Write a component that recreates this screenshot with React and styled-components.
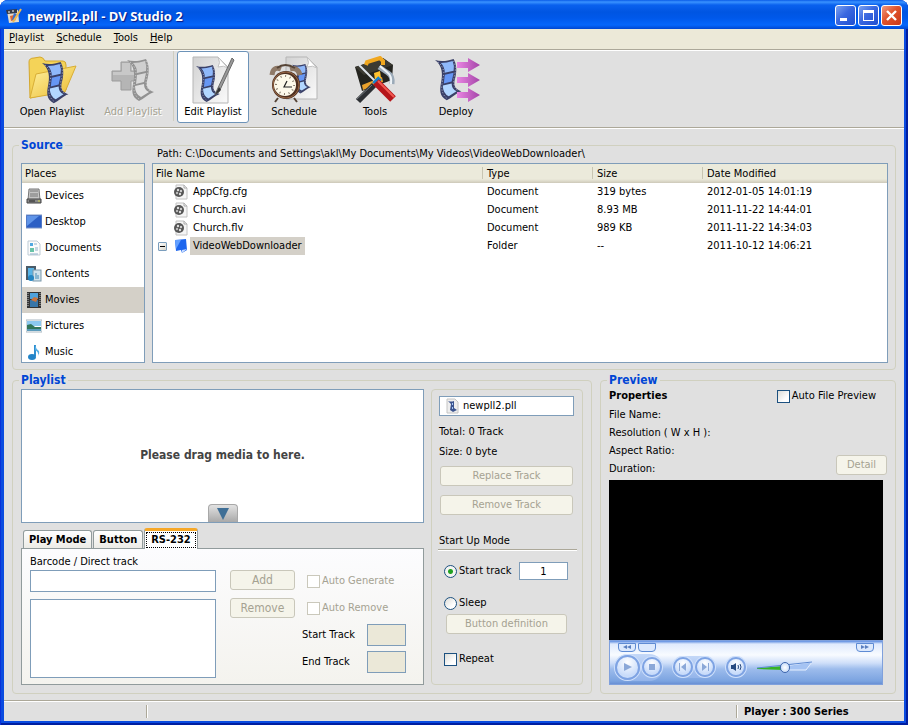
import React, { useState } from 'react';
import styled, { createGlobalStyle, css } from 'styled-components';

const GlobalStyle = createGlobalStyle`
  * { box-sizing: border-box; }
  body {
    margin: 0;
    background: #fff;
    font: 11px/16px "DejaVu Sans Condensed", Tahoma, "Open Sans", sans-serif;
    color: #000;
  }
  button, input, textarea { font: inherit; color: inherit; margin: 0; }
  h1, h2, h3, p, ul, dl, dt { margin: 0; padding: 0; font: inherit; }
  ul { list-style: none; }
`;

// Window frame
const Window = styled.div`
  display: flex;
  flex-direction: column;
  min-height: 100vh;
  border-radius: 8px 8px 0 0;
  background: #0a4be0;
  box-shadow: inset 1px 0 0 #0831d9, inset -2px -2px 0 #001ea0;
  overflow: hidden;
`;
const TitleBar = styled.header`
  display: flex;
  align-items: center;
  gap: 2px;
  height: 29px;
  padding: 2px 6px 0;
  background: linear-gradient(#0a5ce8 0, #3a93ff 2px, #0a61ee 5px, #0055e2 12px, #0058ea 18px, #0566fb 25px, #0046d0 29px);
`;
const WindowTitle = styled.h1`
  flex: 1;
  padding-left: 3px;
  font: bold 13px/16px "Trebuchet MS", "Open Sans", sans-serif;
  color: #fff;
  text-shadow: 1px 1px 1px #0a1883;
`;
const CaptionButton = styled.button`
  width: 21px;
  height: 21px;
  padding: 0;
  border: 1px solid #fff;
  border-radius: 3px;
  background: ${({ $close }) =>
    $close
      ? 'linear-gradient(135deg, #f09a80, #e0532b 45%, #c8381a)'
      : 'linear-gradient(135deg, #7ba2f0, #3a68e0 45%, #1f4fd0)'};
  svg { display: block; }
`;
const Client = styled.div`
  display: flex;
  flex: 1;
  flex-direction: column;
  margin: 0 4px 4px;
  background: #e0e0e0;
`;
const MenuBar = styled.nav`
  display: flex;
  gap: 12px;
  height: 21px;
  padding: 0 5px;
  background: #ece9d8;
  border-bottom: 1px solid #aca899;
`;
const MenuItem = styled.button`
  padding: 0 0 2px;
  border: 0;
  background: none;
  &::first-letter { text-decoration: underline; }
`;

// Toolbar
const Toolbar = styled.div`
  display: flex;
  gap: 9px;
  height: 78px;
  padding: 0 12px;
  border-top: 1px solid #fff;
  border-bottom: 1px solid #aca899;
`;
const ToolButton = styled.button`
  display: flex;
  flex-direction: column;
  align-items: center;
  width: 72px;
  height: 72px;
  padding: 4px 0 0;
  border: 1px solid ${({ $active }) => ($active ? '#6d93b8' : 'transparent')};
  border-radius: 3px;
  background: ${({ $active }) => ($active ? '#fff' : 'none')};
  white-space: nowrap;
  &:disabled {
    color: #a5a292;
    text-shadow: 1px 1px 0 #fff;
  }
`;
const ToolSeparator = styled.span`
  width: 1px;
  height: 70px;
  margin: 0 -6px 0 -5px;
  background: #cfcdc0;
`;

// Group boxes
const Main = styled.main`
  display: grid;
  grid-template-columns: minmax(0, 1fr) 296px;
  gap: 10px 8px;
  flex: 1;
  align-content: start;
  padding: 16px 8px 6px;
  border-top: 1px solid #fff;
`;
const Group = styled.section`
  min-width: 0;
  padding: 0 8px 8px;
  border: 1px solid #d0d0bf;
  border-radius: 4px;
`;
const GroupTitle = styled.h2`
  width: fit-content;
  height: 16px;
  margin: -9px 0 0 -2px;
  padding: 0 2px;
  background: #e0e0e0;
  font-size: 12px;
  font-weight: bold;
  color: #0046d5;
`;
const SourceGroup = styled(Group)`
  grid-column: 1 / -1;
  display: grid;
  grid-template-columns: 124px minmax(0, 1fr);
  grid-template-rows: 17px 200px;
  column-gap: 7px;
  padding-bottom: 6px;
  padding-right: 7px;
`;
const Path = styled.p`
  padding-left: 5px;
  white-space: nowrap;
  overflow: hidden;
`;
const Pane = styled.div`
  min-width: 0;
  overflow: hidden;
  border: 1px solid #7f9db9;
  background: #fff;
`;
const headerLook = css`
  height: 19px;
  background: linear-gradient(#ebeadb 0, #ebeadb 15px, #d6d2c2 18px, #cbc7b8 19px);
`;
const PlacesHeader = styled.h3`
  ${headerLook}
  padding: 2px 3px;
`;
const Place = styled.button`
  display: flex;
  align-items: center;
  gap: 3px;
  width: 100%;
  height: 26px;
  padding: 0 4px;
  border: 0;
  background: ${({ $selected }) => ($selected ? '#d4d0c8' : 'none')};
`;
const FileTable = styled.table`
  width: 100%;
  table-layout: fixed;
  border-collapse: collapse;
`;
const Th = styled.th`
  ${headerLook}
  width: ${({ $width }) => $width || 'auto'};
  padding: 0 3px;
  font-weight: normal;
  text-align: left;
  & + & {
    padding-left: 5px;
    background:
      linear-gradient(#c7c5b2, #c7c5b2) 0 3px / 1px 12px no-repeat,
      linear-gradient(#ebeadb 0, #ebeadb 15px, #d6d2c2 18px, #cbc7b8 19px);
  }
`;
const Td = styled.td`
  height: 18px;
  padding: 0 5px;
  white-space: nowrap;
`;
const FileCell = styled.span`
  display: flex;
  align-items: center;
  gap: 1px;
  padding-left: ${({ $folder }) => ($folder ? '0' : '15px')};
`;
const Toggle = styled.button`
  display: block;
  width: 9px;
  height: 9px;
  margin-right: 5px;
  padding: 3px 1px;
  border: 1px solid #7b9ebd;
  border-radius: 1px;
  background: linear-gradient(135deg, #fff, #d8d4c8);
  &::before {
    content: '';
    display: block;
    height: 1px;
    background: #000;
  }
`;
const FileLabel = styled.span`
  height: 18px;
  padding: 1px 3px;
  background: ${({ $selected }) => ($selected ? '#d4d0c8' : 'none')};
`;

// Shared controls
const Button = styled.button`
  width: ${({ $width }) => $width || '100%'};
  height: 20px;
  padding: 0;
  border: 1px solid #c9c7ba;
  border-radius: 3px;
  background: #f5f4ea;
  white-space: nowrap;
  &:disabled { color: #a5a292; }
`;
const TextBox = styled.input`
  width: ${({ $width }) => $width || '100%'};
  height: ${({ $height }) => $height || '22px'};
  padding: 0 4px;
  border: 1px solid #7f9db9;
  border-radius: 0;
  background: #fff;
  text-align: ${({ $align }) => $align || 'left'};
  &:disabled { background: #ebe8d8; }
`;
const Option = styled.label`
  display: flex;
  align-items: center;
  gap: 2px;
  height: ${({ $height }) => $height || '16px'};
  padding-left: 5px;
  white-space: nowrap;
  color: ${({ $disabled }) => ($disabled ? '#a5a292' : 'inherit')};
`;
const tick = css`
  appearance: none;
  flex: none;
  width: 13px;
  height: 13px;
  border: 1px solid #1c5180;
  background: linear-gradient(135deg, #dcdcd7, #fff 70%);
`;
const Checkbox = styled.input.attrs({ type: 'checkbox' })`
  ${tick}
  &:checked { background: #21a121; }
  &:disabled { border-color: #cac8bb; background: #fff; }
`;
const Radio = styled.input.attrs({ type: 'radio' })`
  ${tick}
  border-radius: 50%;
  &:checked { background: radial-gradient(circle, #21a121 0, #21a121 2px, #f4f4f2 3px); }
`;

// Playlist group
const PlaylistBody = styled.div`
  display: grid;
  grid-template-columns: minmax(0, 1fr) 152px;
  gap: 7px;
  margin-top: 1px;
`;
const DropArea = styled.div`
  display: grid;
  grid-template-rows: 1fr 18px;
  justify-items: center;
  height: 134px;
  border: 1px solid #7f9db9;
  background: #fff;
`;
const DropHint = styled.p`
  align-self: center;
  padding-top: 16px;
  font-size: 12px;
  font-weight: bold;
  color: #444;
`;
const ExpandButton = styled.button`
  width: 30px;
  height: 18px;
  padding: 0;
  border: 1px solid #a8a8a8;
  border-bottom: 0;
  border-radius: 4px 4px 0 0;
  background: linear-gradient(#e2e2e2, #a9a9a9);
  svg { display: block; margin: auto; }
`;
const TabList = styled.div`
  display: flex;
  align-items: flex-end;
  gap: 1px;
  height: 25px;
  padding-left: 2px;
`;
const Tab = styled.button`
  height: 18px;
  padding: 0 5px;
  border: 1px solid #919b9c;
  border-bottom: 0;
  border-radius: 3px 3px 0 0;
  background: linear-gradient(#fff, #ecebe6);
  font-weight: bold;
  white-space: nowrap;
  ${({ $active }) =>
    $active &&
    css`
      height: 21px;
      margin-bottom: -1px;
      padding: 0 1px 1px;
      border-top: 3px solid #f6a828;
      background: #fff;
    `}
`;
const TabFocus = styled.span`
  display: block;
  padding: 0 4px;
  border: 1px dotted #000;
  line-height: 14px;
`;
const TabPanel = styled.div`
  display: flex;
  gap: 14px;
  height: 137px;
  padding: 5px 8px;
  border: 1px solid #919b9c;
  background: linear-gradient(#fcfcfe, #f4f3ee);
`;
const Barcodes = styled.div`
  flex: 1 1 186px;
  label { display: block; height: 16px; }
`;
const CodeList = styled.textarea`
  display: block;
  width: 100%;
  height: 79px;
  margin-top: 7px;
  border: 1px solid #7f9db9;
  background: #fff;
  resize: none;
`;
const CodeButtons = styled.div`
  display: flex;
  flex-direction: column;
  gap: 8px;
  width: 65px;
  padding-top: 16px;
  font-size: 12px;
`;
const CodeOptions = styled.div`
  display: flex;
  flex-direction: column;
  gap: 5px;
  width: 113px;
  margin-left: -7px;
  padding: 16px 9px 0 0;
`;
const TrackField = styled.label`
  display: flex;
  align-items: center;
  justify-content: space-between;
  height: 22px;
`;
const Settings = styled.div`
  padding: 6px 8px 0 7px;
  border: 1px solid #d0d0bf;
  border-radius: 4px;
`;
const NameField = styled.div`
  display: flex;
  align-items: center;
  gap: 3px;
  height: 20px;
  margin-bottom: 6px;
  padding: 0 5px;
  border: 1px solid #7f9db9;
  background: #fff;
`;
const InfoLine = styled.p`
  line-height: 20px;
`;
const TrackButtons = styled.div`
  display: grid;
  gap: 9px;
  padding: 4px 1px 18px;
`;
const ModeTitle = styled.h3`
  margin: 0 -3px 12px -1px;
  padding-left: 1px;
  border-bottom: 1px solid #aca899;
  box-shadow: 0 1px 0 #fff;
`;
const StartRow = styled.div`
  display: flex;
  justify-content: space-between;
  align-items: center;
  margin-bottom: 15px;
  padding-right: 6px;
`;
const DefinitionRow = styled.div`
  padding: 3px 7px 17px;
`;

// Preview group
const PreviewHead = styled.div`
  display: flex;
  justify-content: space-between;
  align-items: center;
  height: 16px;
  padding-right: 11px;
`;
const Properties = styled.h3`
  font-weight: bold;
`;
const PropertyRow = styled.div`
  display: flex;
  justify-content: space-between;
  align-items: flex-end;
  padding: 2px 0;
`;
const PropertyList = styled.dl`
  line-height: 18px;
`;
const DetailButton = styled(Button)`
  margin-bottom: 3px;
`;
const Video = styled.div`
  height: 160px;
  margin-right: 4px;
  background: #000;
`;
const Player = styled.div`
  height: 45px;
  margin-right: 4px;
  padding: 2px 4px 0;
  border: 1px solid #7fa0dc;
  background: linear-gradient(#5b8be0 0, #dfeafd 3px, #f8fbff 14px, #cfdff9 22px, #9dbcec 28px, #7ba3e0 40px, #6990d4 43px);
`;
const PlayerTop = styled.div`
  display: flex;
  gap: 2px;
  height: 9px;
  padding: 0 4px;
`;
const PlayerTab = styled.span`
  width: 18px;
  height: 9px;
  margin-left: ${({ $end }) => ($end ? 'auto' : '0')};
  border: 1px solid #5e8bd4;
  border-radius: 0 0 4px 4px;
  background: #dce9fd;
  svg { display: block; margin: 1px auto 0; }
`;
const PlayerControls = styled.div`
  display: flex;
  align-items: center;
  gap: 9px;
  height: 30px;
`;
const Pill = styled.div`
  display: flex;
  align-items: center;
  gap: 2px;
  padding: 1px;
  border-radius: 14px;
  background: linear-gradient(#c4d8f8, #93b4ea);
`;
const RoundButton = styled.button`
  display: grid;
  place-items: center;
  width: ${({ $size }) => $size || '20px'};
  height: ${({ $size }) => $size || '20px'};
  padding: 0;
  border: 2px solid #7ea3e3;
  border-radius: 50%;
  background: radial-gradient(circle at 50% 25%, #fff, #c9dcfa 70%);
  box-shadow: 0 0 0 1px #cfe0fb;
`;
const Volume = styled.div`
  display: grid;
  align-items: center;
  width: 58px;
  > * { grid-area: 1 / 1; }
  input {
    appearance: none;
    width: 100%;
    height: 12px;
    background: none;
  }
  input::-webkit-slider-thumb {
    appearance: none;
    width: 10px;
    height: 11px;
    border: 1px solid #3e66ad;
    border-radius: 5px;
    background: radial-gradient(#fff, #b8d2f8);
  }
`;

const StatusBar = styled.footer`
  display: flex;
  align-items: center;
  height: 21px;
  border-top: 1px solid #aca899;
  box-shadow: inset 0 1px 0 #fff;
  font-weight: bold;
`;
const StatusCell = styled.span`
  flex: ${({ $flex }) => $flex};
  height: 13px;
  padding-left: 7px;
  line-height: 13px;
  & + & {
    border-left: 1px solid #aca899;
    box-shadow: inset 1px 0 0 #fff;
  }
`;

// Ribbon of film, drawn in a 27 x 42 area
const Film = ({ x = 0, y = 0, scale = 1, gray }) => (
  <g transform={`translate(${x} ${y}) scale(${scale})`}>
    <path
      d="M0 1C6 3 13 2 19 0C23 7 22 15 20 22C19 28 21 31 27 33C21 35 17 40 12 42C4 38 5 31 6 25C8 16 8 7 0 1Z"
      fill={gray ? '#929292' : '#3a4068'}
    />
    <path d="M6 4Q12 4 18 2Q20 7 19 12L10 14Q10 8 6 4Z" fill={gray ? '#cfcfcf' : '#8fb8fa'} />
    <path d="M10 16L19 14L17 23L9 25Z" fill={gray ? '#d9d9d9' : '#6696f4'} />
    <path d="M8 27L17 25Q17 31 22 33L14 38Q8 35 8 27Z" fill={gray ? '#e2e2e2' : '#b2d6ff'} />
    <path
      d="M3 3Q9 8 9 15L7 26Q6 35 12 40M19 2Q22 9 20 16Q17 28 24 33"
      fill="none"
      stroke={gray ? '#e4e4e4' : '#d5daee'}
      strokeWidth="0.8"
      strokeDasharray="1 2"
    />
  </g>
);

const Sheet = ({ x = 0, y = 0, w = 35, h = 46 }) => (
  <g transform={`translate(${x} ${y})`}>
    <path d={`M0 0H${w - 10}L${w} 10V${h}H0Z`} fill="url(#sheet)" stroke="#b5b5b5" />
    <path d={`M${w - 10} 0Q${w - 7} 6 ${w - 10} 10Q${w - 4} 8 ${w} 11Z`} fill="#fff" stroke="#c2c2c2" />
    <defs>
      <linearGradient id="sheet" x1="0" y1="0" x2="1" y2="1">
        <stop offset="0" stopColor="#d2d2d2" />
        <stop offset="1" stopColor="#fafafa" />
      </linearGradient>
    </defs>
  </g>
);

const OpenIcon = () => (
  <svg width="50" height="48" viewBox="0 0 50 48">
    <defs>
      <linearGradient id="folder" x1="0" y1="0" x2="1" y2="1">
        <stop offset="0" stopColor="#fff3a5" />
        <stop offset="1" stopColor="#eab92c" />
      </linearGradient>
    </defs>
    <path d="M2 6Q2 2 7 2L13 1Q16 1 18 5L36 5Q39 5 39 9V34L3 42Z" fill="#f4d358" stroke="#d4a72e" />
    <path d="M9 18L49 10L38 36L3 42Z" fill="url(#folder)" stroke="#d9ae35" />
    <Film x={15} y={6} scale={0.98} />
  </svg>
);
const AddIcon = () => (
  <svg width="50" height="48" viewBox="0 0 50 48">
    <path d="M13 6H23V15H32V25H23V34H13V25H4V15H13Z" fill="#b5b5b5" stroke="#9b9b9b" />
    <path d="M14 7H22V16H31V19H5V16H14Z" fill="#c8c8c8" />
    <Film x={19} y={3} scale={1} gray />
  </svg>
);
const EditIcon = () => (
  <svg width="50" height="48" viewBox="0 0 50 48">
    <Sheet x={5} y={1} w={35} h={46} />
    <Film x={8} y={9} scale={0.88} />
    <path d="M44 2L29 34L27 39L31 36L46 4Z" fill="#9a9a9a" stroke="#6a6a6a" />
    <path d="M31 31L27 39L33 34Z" fill="#333" />
  </svg>
);
const ScheduleIcon = () => (
  <svg width="50" height="48" viewBox="0 0 50 48">
    <Sheet x={17} y={1} w={31} h={42} />
    <Film x={23} y={8} scale={0.7} />
    <path d="M3 19Q4 10 12 13M21 13Q29 11 31 19" fill="none" stroke="#8f7a68" strokeWidth="5" />
    <path d="M8 12Q16 6 26 12M9 42L6 46M25 42L28 46" fill="none" stroke="#564436" strokeWidth="2" />
    <circle cx="17" cy="29" r="14" fill="#4e3020" />
    <circle cx="17" cy="29" r="13" fill="none" stroke="#9b6a47" />
    <circle cx="16" cy="29" r="11" fill="#fdf9ea" />
    <circle cx="16" cy="29" r="9" fill="none" stroke="#857a6c" strokeDasharray="1 3.7" strokeWidth="2" />
    <path d="M23 31L15 31L18 25" fill="none" stroke="#222" strokeWidth="1.2" />
  </svg>
);
const ToolsIcon = () => (
  <svg width="50" height="48" viewBox="0 0 50 48">
    <path d="M5 11L33 2L43 9L42 24L12 35Z" fill="#24241f" />
    <path d="M5 11L33 2L43 9L14 19Z" fill="#3b3a32" />
    <path d="M16 9L17 6L30 2L33 5L33 9" fill="none" stroke="#f0a71f" strokeWidth="4" />
    <path d="M12 29L32 21L33 26L13 34Z" fill="#e9a12c" />
    <path d="M24 17L30 15L31 22L25 24Z" fill="#ffc12e" />
    <path d="M9 9L29 29" stroke="#dfe5ec" strokeWidth="2" />
    <path d="M29 11L38 17Q43 20 42 28" fill="none" stroke="#9baab8" strokeWidth="5" />
    <path d="M30 10L38 17Q42 20 41 28" fill="none" stroke="#eef3f7" strokeWidth="2" />
    <path d="M30 22L24 28" stroke="#1583d0" strokeWidth="5" />
    <path d="M24 29L8 45" stroke="#2c2f33" strokeWidth="6" />
    <path d="M22 29L7 43" stroke="#71777c" strokeWidth="1" />
    <path d="M26 26L43 43" stroke="#b5161b" strokeWidth="8" />
    <path d="M28 25L44 41" stroke="#f25850" strokeWidth="2" />
  </svg>
);
const DeployIcon = () => (
  <svg width="50" height="48" viewBox="0 0 50 48">
    <defs>
      <linearGradient id="arrow">
        <stop offset="0" stopColor="#e985e2" />
        <stop offset="1" stopColor="#a444a8" />
      </linearGradient>
    </defs>
    <Film x={4} y={3} scale={0.98} />
    {[9, 24, 39].map((y) => (
      <path key={y} d={`M26 ${y - 3}H37V${y - 7}L49 ${y}L37 ${y + 7}V${y + 3}H26Z`} fill="url(#arrow)" />
    ))}
  </svg>
);

const AppIcon = () => (
  <svg width="16" height="16" viewBox="0 0 16 16">
    <path d="M1 3L12 2L13 14L3 15Z" fill="#e7dcc8" />
    <path d="M0 2L11 1V5L1 6Z" fill="#353a48" />
    <path d="M2 4H4M6 3H8" stroke="#fff" />
    <path d="M4 8L8 7L9 12L5 13Z" fill="#e06735" />
    <path d="M8 5L11 6L9 13L6 12Z" fill="#3670cf" />
    <path d="M15 1L7 14" stroke="#f1b94c" strokeWidth="2" />
  </svg>
);
const DocIcon = () => (
  <svg width="16" height="16" viewBox="0 0 16 16">
    <path d="M3 1H11L14 4V15H3Z" fill="#f5f5f5" stroke="#c2c2c2" />
    <path d="M11 1V4H14" fill="none" stroke="#aaa" />
    <circle cx="6" cy="8" r="5" fill="#555" />
    <circle cx="5" cy="6" r="1.2" fill="#ddd" />
    <circle cx="8" cy="7" r="1.2" fill="#ccc" />
    <circle cx="4" cy="9" r="1.2" fill="#bbb" />
    <circle cx="7" cy="10" r="1.2" fill="#ddd" />
  </svg>
);
const FolderIcon = () => (
  <svg width="16" height="16" viewBox="0 0 16 16">
    <path d="M2 2L13 1L14 12L9 15L8 12L3 13Z" fill="#1d66ee" />
    <path d="M2 2L8 2L3 11Z" fill="#63a0ff" />
    <path d="M9 12L14 11L9 15Z" fill="#c7dcff" />
  </svg>
);
const PlaylistIcon = () => (
  <svg width="15" height="16" viewBox="0 0 15 16">
    <path d="M2 1H10L13 4V15H2Z" fill="#eee" stroke="#c4c4c4" />
    <path d="M3 3Q6 4 9 3L9 10L12 12L8 14L5 12L6 6Z" fill="#3c548e" />
    <path d="M7 5H8V7H7ZM7 9H8V11H7Z" fill="#a8c8fa" />
  </svg>
);

const placeIcons = {
  Devices: (
    <>
      <path d="M3 1H13L14 12H2Z" fill="#c5c5c5" stroke="#777" />
      <path d="M4 3H12M4 6H12M4 8H12" stroke="#777" />
      <path d="M1 11H15V15H1Z" fill="#888" stroke="#444" />
      <path d="M3 13H9" stroke="#222" />
      <path d="M12 13H14" stroke="#d6dc48" />
    </>
  ),
  Desktop: (
    <>
      <rect x="0" y="1" width="16" height="13" fill="#2b5fc5" stroke="#7893c6" />
      <path d="M1 12L13 2H1Z" fill="#5f94e8" />
    </>
  ),
  Documents: (
    <>
      <path d="M2 1H11L14 4V15H2Z" fill="#fbfbfb" stroke="#bdcbd5" />
      <rect x="4" y="3" width="3" height="3" fill="#50a8e0" />
      <rect x="4" y="8" width="4" height="4" fill="#68c3a8" />
      <path d="M8 4H11M9 8H12M9 10H12M4 14H12" stroke="#8eb1cb" />
    </>
  ),
  Contents: (
    <>
      <rect x="0" y="0" width="10" height="14" fill="#4a5b68" />
      <rect x="2" y="2" width="6" height="9" fill="#58b3e5" />
      <rect x="7" y="4" width="8" height="11" fill="#cfe2ec" stroke="#7b98aa" />
      <path d="M10 7V13M12 9V13" stroke="#428ab5" />
      <circle cx="5" cy="12" r="3" fill="#2385c2" />
    </>
  ),
  Movies: (
    <>
      <rect x="1" y="0" width="14" height="16" fill="#333" />
      <path d="M2 1V15M14 1V15" stroke="#bbb" strokeDasharray="1 1" />
      <rect x="4" y="1" width="8" height="6" fill="#4fa2dd" />
      <rect x="4" y="8" width="8" height="7" fill="#3876a9" />
      <path d="M5 8L8 5L12 6L10 10Z" fill="#c9743f" />
    </>
  ),
  Pictures: (
    <>
      <rect x="0" y="2" width="16" height="12" fill="#fff" stroke="#a9b8c2" />
      <rect x="1" y="3" width="14" height="5" fill="#8cc8f0" />
      <path d="M1 7L5 6L9 9L15 9V11H1Z" fill="#32765a" />
      <rect x="1" y="11" width="14" height="2" fill="#5b9bbb" />
    </>
  ),
  Music: (
    <>
      <path d="M9 1V12" stroke="#2f8fd0" strokeWidth="2" />
      <path d="M9 1Q10 5 13 7Q14 9 12 12Q13 8 9 6Z" fill="#57aee4" />
      <ellipse cx="6" cy="13" rx="4" ry="3" fill="#2284c8" />
    </>
  ),
};

const tools = [
  { label: 'Schedule', Icon: ScheduleIcon },
  { label: 'Tools', Icon: ToolsIcon },
  { label: 'Deploy', Icon: DeployIcon },
];

const files = [
  { name: 'AppCfg.cfg', type: 'Document', size: '319 bytes', date: '2012-01-05 14:01:19' },
  { name: 'Church.avi', type: 'Document', size: '8.93 MB', date: '2011-11-22 14:44:01' },
  { name: 'Church.flv', type: 'Document', size: '989 KB', date: '2011-11-22 14:34:03' },
  { name: 'VideoWebDownloader', type: 'Folder', size: '--', date: '2011-10-12 14:06:21' },
];

const FileName = ({ name, folder }) => (
  <FileCell $folder={folder}>
    {folder && <Toggle aria-label="Collapse" />}
    {folder ? <FolderIcon /> : <DocIcon />}
    <FileLabel $selected={folder}>{name}</FileLabel>
  </FileCell>
);

const Source = () => {
  const [place, setPlace] = useState('Movies');

  return (
    <SourceGroup>
      <GroupTitle>Source</GroupTitle>
      <Path>Path: C:\Documents and Settings\akl\My Documents\My Videos\VideoWebDownloader\</Path>
      <Pane>
        <PlacesHeader>Places</PlacesHeader>
        <ul>
          {Object.keys(placeIcons).map((name) => (
            <li key={name}>
              <Place $selected={name === place} onClick={() => setPlace(name)}>
                <svg width="16" height="16" viewBox="0 0 16 16">{placeIcons[name]}</svg>
                {name}
              </Place>
            </li>
          ))}
        </ul>
      </Pane>
      <Pane>
        <FileTable>
          <thead>
            <tr>
              <Th>File Name</Th>
              <Th $width="110px">Type</Th>
              <Th $width="110px">Size</Th>
              <Th $width="185px">Date Modified</Th>
            </tr>
          </thead>
          <tbody>
            {files.map((file) => (
              <tr key={file.name}>
                <Td>
                  <FileName name={file.name} folder={file.type === 'Folder'} />
                </Td>
                <Td>{file.type}</Td>
                <Td>{file.size}</Td>
                <Td>{file.date}</Td>
              </tr>
            ))}
          </tbody>
        </FileTable>
      </Pane>
    </SourceGroup>
  );
};

const Playlist = () => (
  <Group>
    <GroupTitle>Playlist</GroupTitle>
    <PlaylistBody>
      <div>
        <DropArea>
          <DropHint>Please drag media to here.</DropHint>
          <ExpandButton aria-label="Expand">
            <svg width="12" height="12" viewBox="0 0 12 12">
              <path d="M0 0H12L6 12Z" fill="#3f6f96" />
            </svg>
          </ExpandButton>
        </DropArea>
        <TabList role="tablist">
          <Tab role="tab">Play Mode</Tab>
          <Tab role="tab">Button</Tab>
          <Tab role="tab" $active aria-selected="true">
            <TabFocus>RS-232</TabFocus>
          </Tab>
        </TabList>
        <TabPanel>
          <Barcodes>
            <label htmlFor="barcode">Barcode / Direct track</label>
            <TextBox id="barcode" />
            <CodeList aria-label="Barcodes" />
          </Barcodes>
          <CodeButtons>
            <Button disabled>Add</Button>
            <Button disabled>Remove</Button>
          </CodeButtons>
          <CodeOptions>
            <Option $disabled $height="22px">
              <Checkbox disabled />
              Auto Generate
            </Option>
            <Option $disabled $height="22px">
              <Checkbox disabled />
              Auto Remove
            </Option>
            <TrackField>
              Start Track
              <TextBox $width="39px" disabled />
            </TrackField>
            <TrackField>
              End Track
              <TextBox $width="39px" disabled />
            </TrackField>
          </CodeOptions>
        </TabPanel>
      </div>
      <Settings>
        <NameField>
          <PlaylistIcon />
          newpll2.pll
        </NameField>
        <InfoLine>Total: 0 Track</InfoLine>
        <InfoLine>Size: 0 byte</InfoLine>
        <TrackButtons>
          <Button disabled>Replace Track</Button>
          <Button disabled>Remove Track</Button>
        </TrackButtons>
        <ModeTitle>Start Up Mode</ModeTitle>
        <StartRow>
          <Option>
            <Radio name="startup" defaultChecked />
            Start track
          </Option>
          <TextBox aria-label="Track number" defaultValue="1" $width="49px" $height="18px" $align="center" />
        </StartRow>
        <Option>
          <Radio name="startup" />
          Sleep
        </Option>
        <DefinitionRow>
          <Button disabled>Button definition</Button>
        </DefinitionRow>
        <Option>
          <Checkbox />
          Repeat
        </Option>
      </Settings>
    </PlaylistBody>
  </Group>
);

const Glyph = ({ d }) => (
  <svg width="12" height="10" viewBox="0 0 12 10">
    <path d={d} fill="#8ba8d8" />
  </svg>
);

const Arrows = ({ d }) => (
  <svg width="10" height="4" viewBox="0 0 10 4">
    <path d={d} fill="#5a7fc0" />
  </svg>
);

const Preview = () => (
  <Group>
    <GroupTitle>Preview</GroupTitle>
    <PreviewHead>
      <Properties>Properties</Properties>
      <Option>
        <Checkbox />
        Auto File Preview
      </Option>
    </PreviewHead>
    <PropertyRow>
      <PropertyList>
        <dt>File Name:</dt>
        <dt>Resolution ( W x H ):</dt>
        <dt>Aspect Ratio:</dt>
        <dt>Duration:</dt>
      </PropertyList>
      <DetailButton $width="51px" disabled>Detail</DetailButton>
    </PropertyRow>
    <Video />
    <Player>
      <PlayerTop>
        <PlayerTab><Arrows d="M5 0V4L1 2ZM9 0V4L5 2Z" /></PlayerTab>
        <PlayerTab />
        <PlayerTab $end><Arrows d="M1 0V4L5 2ZM5 0V4L9 2Z" /></PlayerTab>
      </PlayerTop>
      <PlayerControls>
        <Pill>
          <RoundButton $size="25px" aria-label="Play"><Glyph d="M2 1L10 5L2 9Z" /></RoundButton>
          <RoundButton aria-label="Stop"><Glyph d="M3 2H9V8H3Z" /></RoundButton>
        </Pill>
        <Pill>
          <RoundButton aria-label="Previous"><Glyph d="M2 1H3V9H2ZM9 1V9L4 5Z" /></RoundButton>
          <RoundButton aria-label="Next"><Glyph d="M9 1H10V9H9ZM3 1L8 5L3 9Z" /></RoundButton>
        </Pill>
        <Pill>
          <RoundButton aria-label="Mute">
            <svg width="12" height="10" viewBox="0 0 12 10">
              <path d="M1 3H3L6 1V9L3 7H1Z" fill="#274a80" />
              <path d="M8 3Q9 5 8 7M10 2Q12 5 10 8" fill="none" stroke="#274a80" />
            </svg>
          </RoundButton>
        </Pill>
        <Volume>
          <svg width="58" height="12" viewBox="0 0 58 12">
            <path d="M1 7L28 5V9L1 8Z" fill="#35b324" />
            <path d="M28 5L56 1L50 9H28Z" fill="#a5c3f3" stroke="#e5effe" />
            <path d="M1 7L56 1" stroke="#5e8ad2" />
          </svg>
          <input type="range" aria-label="Volume" defaultValue="50" />
        </Volume>
      </PlayerControls>
    </Player>
  </Group>
);

const App = () => (
  <>
    <GlobalStyle />
    <Window>
      <TitleBar>
        <AppIcon />
        <WindowTitle>newpll2.pll - DV Studio 2</WindowTitle>
        <CaptionButton aria-label="Minimize">
          <svg width="19" height="19" viewBox="0 0 19 19"><path d="M4 12H11V15H4Z" fill="#fff" /></svg>
        </CaptionButton>
        <CaptionButton aria-label="Maximize">
          <svg width="19" height="19" viewBox="0 0 19 19">
            <path d="M4 4H15V15H4ZM5 7V14H14V7Z" fill="#fff" fillRule="evenodd" />
          </svg>
        </CaptionButton>
        <CaptionButton $close aria-label="Close">
          <svg width="19" height="19" viewBox="0 0 19 19">
            <path d="M5 5L14 14M14 5L5 14" stroke="#fff" strokeWidth="2.4" />
          </svg>
        </CaptionButton>
      </TitleBar>
      <Client>
        <MenuBar>
          {['Playlist', 'Schedule', 'Tools', 'Help'].map((item) => (
            <MenuItem key={item}>{item}</MenuItem>
          ))}
        </MenuBar>
        <Toolbar>
          <ToolButton><OpenIcon />Open Playlist</ToolButton>
          <ToolButton disabled><AddIcon />Add Playlist</ToolButton>
          <ToolSeparator />
          <ToolButton $active><EditIcon />Edit Playlist</ToolButton>
          {tools.map(({ label, Icon }) => (
            <ToolButton key={label}><Icon />{label}</ToolButton>
          ))}
        </Toolbar>
        <Main>
          <Source />
          <Playlist />
          <Preview />
        </Main>
        <StatusBar>
          <StatusCell $flex="0 0 142px" />
          <StatusCell $flex="1" />
          <StatusCell $flex="0 0 168px">Player : 300 Series</StatusCell>
        </StatusBar>
      </Client>
    </Window>
  </>
);

export default App;
